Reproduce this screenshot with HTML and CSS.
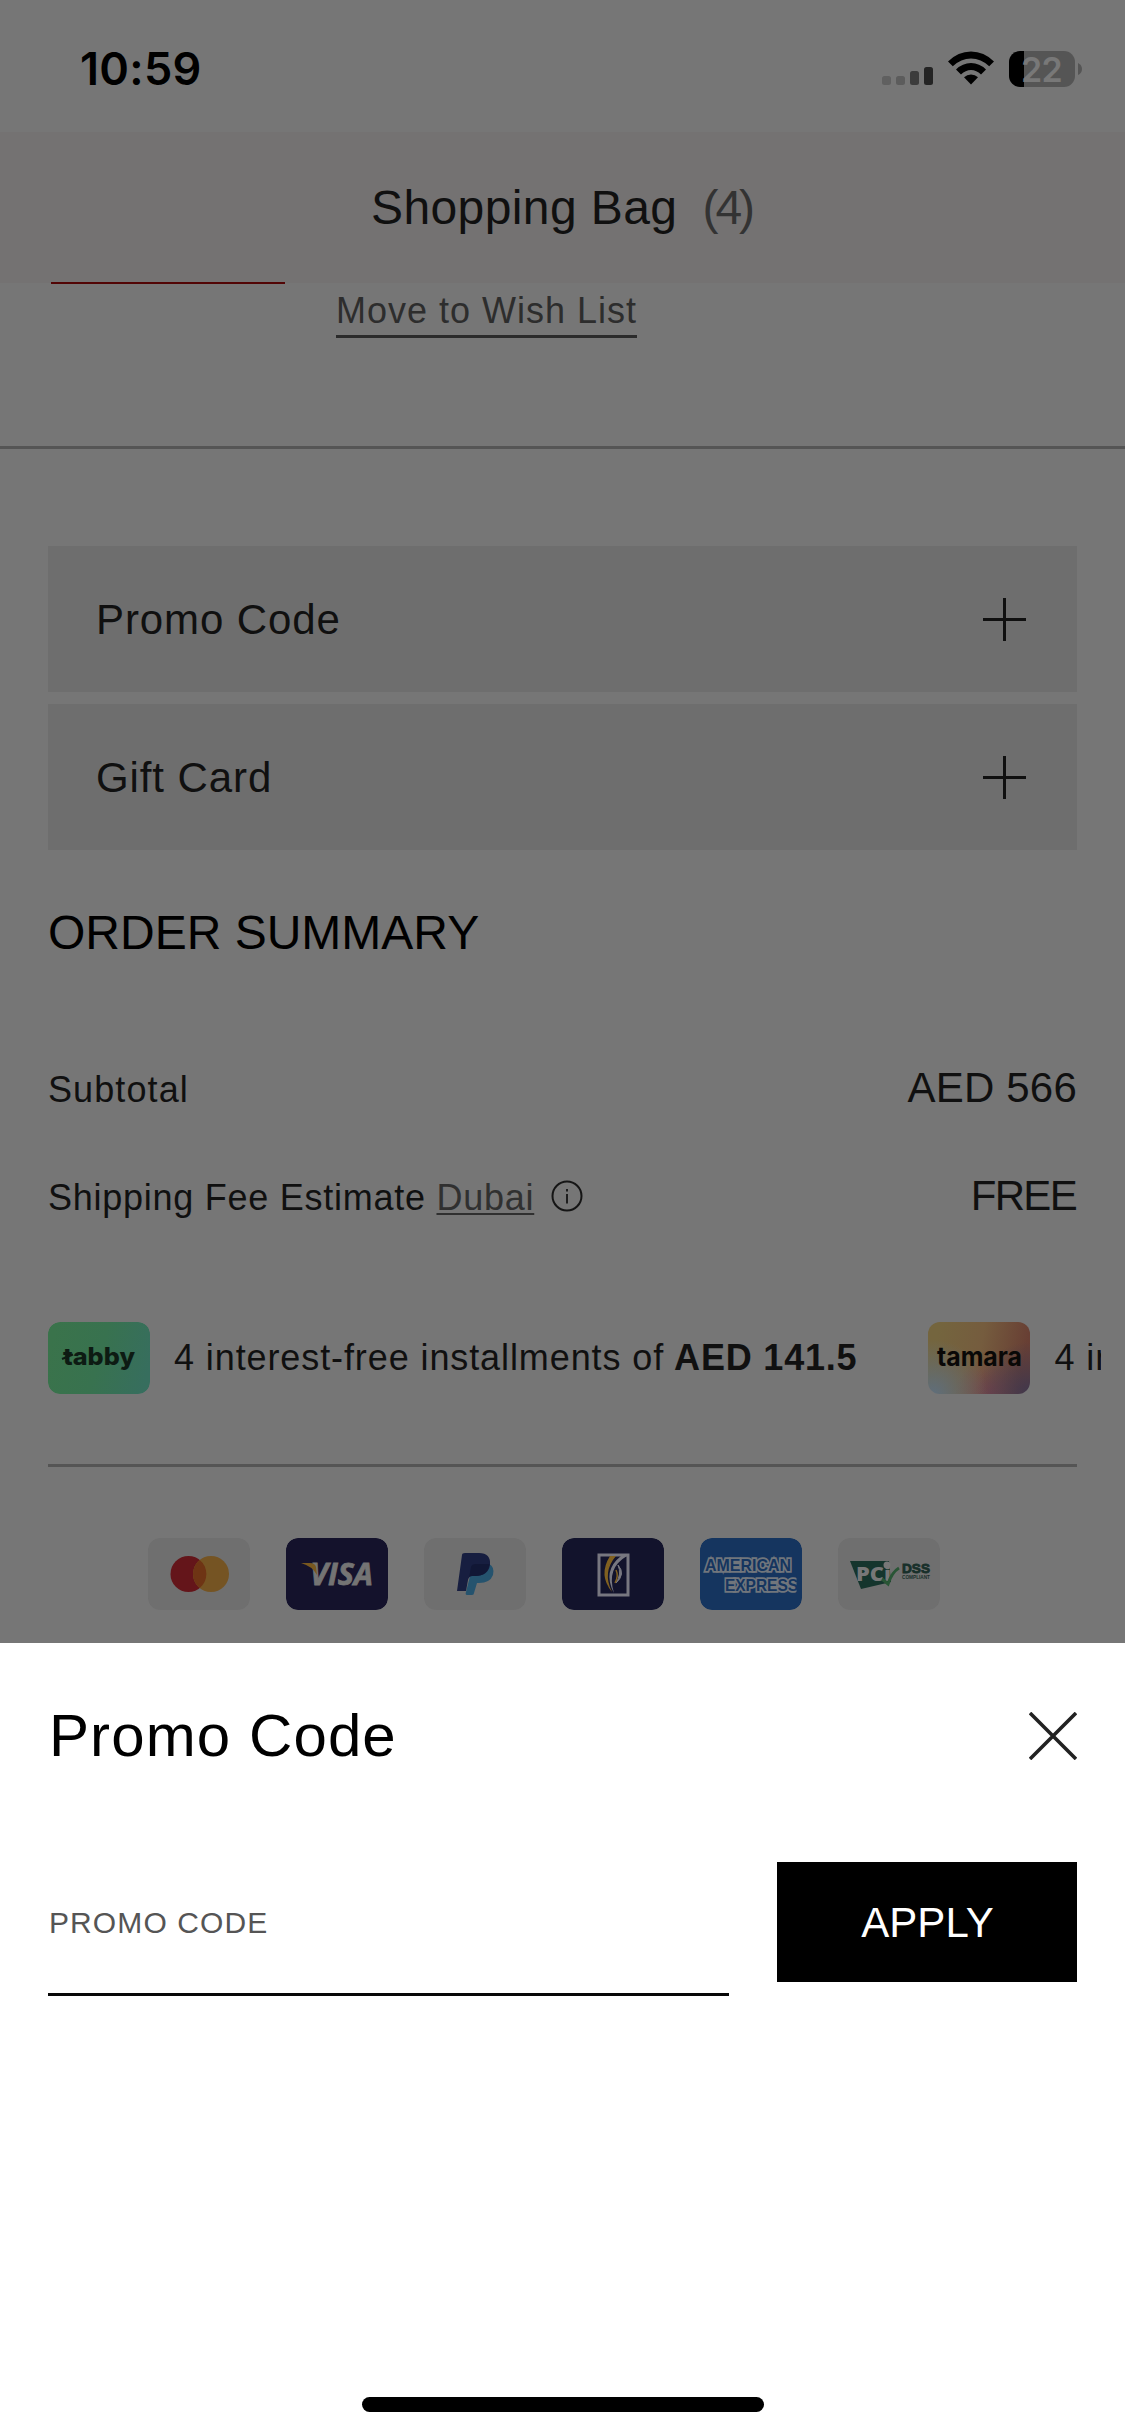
FILE: index.html
```html
<!DOCTYPE html>
<html lang="en">
<head>
<meta charset="utf-8">
<title>Shopping Bag</title>
<link rel="stylesheet" href="styles.css">
</head>
<body>
<div class="screen">
  <div class="status">
    <span class="time">10:59</span>
    <div class="status-icons">
      <svg class="signal" width="51" height="18" viewBox="0 0 51 18">
        <rect x="0" y="9" width="9" height="9" rx="2.5" fill="#606060"/>
        <rect x="14" y="9" width="9" height="9" rx="2.5" fill="#5c5c5c"/>
        <rect x="28" y="4" width="9" height="14" rx="2.5" fill="#3c3c3c"/>
        <rect x="42" y="0" width="9" height="18" rx="2.5" fill="#242424"/>
      </svg>
      <svg class="wifi" width="46" height="34" viewBox="0 0 46 34">
        <path d="M0 10.500Q10 .5 23 .5T46 10.500L41.200 15.300Q33 7.500 23 7.500T4.800 15.300Z"/>
        <path d="M8 18.500Q14.500 12 23 12T38 18.500L33 23.500Q28.500 19 23 19T13 23.500Z"/>
        <path d="M16 26.300Q19 23.500 23 23.500T30 26.300L23 33.500Z"/>
      </svg>
      <div class="battery"><span class="charge">22</span></div>
      <svg class="battery-tip" width="4" height="12" viewBox="0 0 4 12"><path d="M0 0Q4 2 4 6T0 12Z" fill="#555"/></svg>
    </div>
  </div>

  <header class="bag-header">
    <h1>Shopping Bag</h1><span class="count">(4)</span>
  </header>

  <section class="item">
    <div class="thumb-edge"></div>
    <a class="wish">Move to Wish List</a>
  </section>

  <main class="checkout">
    <div class="row-panel"><span>Promo Code</span>
      <svg width="43" height="43" viewBox="0 0 43 43"><path d="M0 21.500H43M21.500 0V43" stroke="#101010" stroke-width="3"/></svg>
    </div>
    <div class="row-panel"><span>Gift Card</span>
      <svg width="43" height="43" viewBox="0 0 43 43"><path d="M0 21.500H43M21.500 0V43" stroke="#101010" stroke-width="3"/></svg>
    </div>

    <h2>ORDER SUMMARY</h2>

    <div class="line subtotal"><span class="label">Subtotal</span><span class="amount">AED 566</span></div>
    <div class="line shipping">
      <span class="label">Shipping Fee Estimate <a class="city">Dubai</a></span>
      <svg class="info" width="32" height="32" viewBox="0 0 32 32" fill="none" stroke="#151515"><circle cx="16" cy="16" r="14.500" stroke-width="2"/><path d="M16 14V23.500M16 9V11.500" stroke-width="1.800"/></svg>
      <span class="amount free">FREE</span>
    </div>

    <div class="plans">
      <svg class="card" width="102" height="72" viewBox="0 0 102 72">
        <defs><linearGradient id="tabbyFill" x1="0" x2="1" y1=".4" y2=".6"><stop stop-color="#3a734b"/><stop offset=".5" stop-color="#38724f"/><stop offset="1" stop-color="#376e5e"/></linearGradient></defs>
        <rect width="102" height="72" rx="12" fill="url(#tabbyFill)"/>
        <text class="tabby-name" x="15" y="42.500" textLength="72" lengthAdjust="spacingAndGlyphs">tabby</text>
        <path d="M14 37L25 32.500" stroke="#0d1b13" stroke-width="2"/>
      </svg>
      <span class="plan-text first-plan">4 interest-free installments of</span><b class="plan-sum">AED 141.5</b>
      <div class="card tamara"><svg width="102" height="72" viewBox="0 0 102 72"><text class="tamara-name" x="9" y="44" textLength="85" lengthAdjust="spacingAndGlyphs">tamara</text></svg></div>
      <span class="plan-text next-plan">4 interest-free</span>
    </div>

    <hr class="divider">

    <div class="payments">
      <svg class="card" width="102" height="72" viewBox="0 0 102 72">
        <rect width="102" height="72" rx="12" fill="#6f6f6f"/>
        <circle cx="40.500" cy="36" r="18" fill="#64151a"/><circle cx="63" cy="36" r="18" fill="#755423"/>
        <path d="M51.700 22A18 18 0 0 1 51.700 50A18 18 0 0 1 51.700 22Z" fill="#6e3414"/>
      </svg>
      <svg class="card" width="102" height="72" viewBox="0 0 102 72">
        <rect width="102" height="72" rx="12" fill="#14122c"/>
        <text class="visa-name" x="24" y="47" textLength="63" lengthAdjust="spacingAndGlyphs">VISA</text>
        <path d="M15 25H24Q29 25 30 29L31 37Q26 28 15 25Z" fill="#79581f"/>
      </svg>
      <svg class="card" width="102" height="72" viewBox="0 0 102 72">
        <rect width="102" height="72" rx="12" fill="#6f6f6f"/>
        <path d="M65 26Q71 29 69 37Q66 45 55 45H53L50 55Q50 57 48 57H43Q41 57 42 54L46 38Z" fill="#25536e"/>
        <path d="M38 17Q38 15 41 15H55Q67 15 66 27Q64 38 51 38H48Q45 38 44 42L42 53H33Z" fill="#171e40"/>
        <path d="M47 29Q48 26 52 26H65.500Q64 38 51 38H48Q45 38 45 40Z" fill="#111735"/>
      </svg>
      <svg class="card" width="102" height="72" viewBox="0 0 102 72">
        <rect width="102" height="72" rx="12" fill="#12132c"/>
        <rect x="37" y="17" width="29" height="40" fill="none" stroke="#777780" stroke-width="3"/>
        <path d="M54 18Q40 34 50 54Q36 37 48 18Z" fill="#806020"/>
        <path d="M65 18Q44 30 52 55Q40 33 59 18Z" fill="#777780"/>
        <path d="M56 27Q64 36 54 45Q60 36 56 27Z" fill="#777780" stroke="#777780"/>
        <path d="M54 32Q57 38 53 45" fill="none" stroke="#806020" stroke-width="1.500"/>
      </svg>
      <svg class="card" width="102" height="72" viewBox="0 0 102 72">
        <rect width="102" height="72" rx="12" fill="#15355f"/>
        <g class="amex-name"><text x="5" y="33" textLength="86" lengthAdjust="spacingAndGlyphs">AMERICAN</text><text x="25" y="52.500" textLength="73" lengthAdjust="spacingAndGlyphs">EXPRESS</text></g>
        <rect x="96.500" y="36" width="5.500" height="20" fill="#15355f"/>
      </svg>
      <svg class="card" width="102" height="72" viewBox="0 0 102 72">
        <rect width="102" height="72" rx="12" fill="#6f6f6f"/>
        <path d="M12 23H51L53 44L23 51Z" fill="#15352d"/>
        <circle cx="49" cy="27" r="3.500" fill="#777"/>
        <text class="pci-name" x="18" y="43" textLength="35" lengthAdjust="spacingAndGlyphs">PCi</text>
        <path d="M44 41L50 46Q54 34 61 30" fill="none" stroke="#295535" stroke-width="3"/>
        <text class="dss-name" x="64" y="35" textLength="28" lengthAdjust="spacingAndGlyphs">DSS</text>
        <text class="dss-note" x="64" y="40.500" textLength="28" lengthAdjust="spacingAndGlyphs">COMPLIANT</text>
      </svg>
    </div>
  </main>

  <section class="sheet">
    <div class="sheet-head">
      <h2>Promo Code</h2>
      <svg width="48" height="48" viewBox="0 0 48 48"><path d="M1 1L47 47M47 1L1 47" stroke="#222" stroke-width="3.6"/></svg>
    </div>
    <div class="form">
      <div class="field">PROMO CODE</div>
      <button class="apply">APPLY</button>
    </div>
    <div class="home-bar"></div>
  </section>
</div>
</body>
</html>
```

FILE: styles.css
```css
* { box-sizing: border-box; }
body { margin: 0; background: #fff; font-family: "Liberation Sans", Arial, sans-serif; color: #101010; }
h1, h2 { margin: 0; font-weight: 400; }
svg { display: block; flex: none; }
.screen { width: 1125px; height: 2436px; display: flex; flex-direction: column; background: #767676; overflow: hidden; white-space: nowrap; }

.status { height: 132px; flex: none; display: flex; justify-content: space-between; padding: 0 43px 0 80px; }
.time { margin-top: 41px; font: 600 45px/56px Inter, sans-serif; color: #000; letter-spacing: .3px; }
.status-icons { display: flex; align-items: flex-start; padding-top: 51px; }
.signal { margin: 16px 15px 0 0; }
.wifi { margin-right: 15px; }
.battery { width: 66px; height: 36px; border-radius: 11px; background: linear-gradient(90deg, #000 15px, #555 15px); }
.charge { display: block; padding-left: 12px; font: 600 34px/37px Inter, sans-serif; color: #787878; letter-spacing: -.8px; }
.battery-tip { margin: 12px 0 0 3px; }

.bag-header { height: 151px; flex: none; display: flex; align-items: flex-start; padding-left: 371px; background: #747272; font-size: 48px; line-height: 56px; }
.bag-header h1 { margin-top: 48px; font-size: 48px; letter-spacing: .4px; }
.count { margin: 48px 0 0 25px; color: #333; letter-spacing: -3px; }

.item { height: 166px; flex: none; display: flex; align-items: flex-start; border-bottom: 3px solid #555; padding-left: 51px; }
.thumb-edge { width: 234px; height: 2px; margin-top: -1px; background: #520505; }
.wish { margin: 7px 0 0 51px; height: 48px; padding-top: 1px; border-bottom: 3px solid #2b2b2b; font-size: 36px; line-height: 40px; color: #2d2d2d; letter-spacing: 1px; }

.checkout { height: 1194px; flex: none; display: flex; flex-direction: column; padding: 97px 48px 0; }
.row-panel { height: 146px; margin-bottom: 12px; display: flex; align-items: center; justify-content: space-between; padding: 0 51px 0 48px; background: #6e6e6e; font-size: 42px; letter-spacing: .9px; }
.row-panel span { padding-top: 2px; }
.checkout h2 { margin-top: 43px; font-size: 48px; line-height: 56px; height: 56px; color: #000; }
.line { height: 48px; display: flex; align-items: baseline; line-height: 48px; }
.subtotal { margin-top: 103px; }
.subtotal .label { letter-spacing: 1.1px; }
.shipping { margin-top: 60px; }
.label { font-size: 36px; letter-spacing: .74px; }
.amount { margin-left: auto; font-size: 42px; letter-spacing: .2px; }
.free { letter-spacing: -1.7px; margin-right: 1px; }
.city { color: #303030; text-decoration: underline; text-decoration-thickness: 2px; text-underline-offset: 3px; }
.info { align-self: flex-start; margin: 8px 0 0 17px; }

.plans { height: 72px; margin-top: 102px; width: 1053px; display: flex; align-items: center; overflow: hidden; font-size: 36px; }
.card { width: 102px; height: 72px; border-radius: 12px; flex: none; }
.plan-text { margin-left: 24px; letter-spacing: .9px; }
.plan-sum { margin-left: 10px; width: 185px; letter-spacing: .8px; }
.tamara { margin-left: 71px; background: radial-gradient(circle at 5% 100%, #5f6e7b 0, transparent 45%), radial-gradient(circle at 100% 100%, #3f374d 0, transparent 42%), radial-gradient(circle at 62% 100%, #70444c 0, transparent 38%), linear-gradient(100deg, #74653e 10%, #755c3e 50%, #683f34 90%); }
.tabby-name { font: 800 24px Inter, sans-serif; fill: #0d1b13; }
.tamara-name { font: 700 26px Inter, sans-serif; fill: #090807; }

.divider { width: 100%; height: 3px; margin: 70px 0 0; border: 0; background: #555; flex: none; }
.payments { display: flex; gap: 36px; margin-top: 71px; padding-left: 100px; }
.visa-name { font: italic 700 31px "Open Sans", sans-serif; fill: #747474; stroke: #747474; stroke-width: .8px; }
.amex-name { font: 700 17px "Liberation Sans", sans-serif; fill: #15355f; stroke: #71767c; stroke-width: 3.6px; paint-order: stroke; }
.pci-name { font: 800 20px "Open Sans", sans-serif; fill: #777; }
.dss-name { font: 700 13px "Liberation Sans", sans-serif; fill: #18302a; stroke: #18302a; stroke-width: .8px; }
.dss-note { font: 700 5.5px "Liberation Sans", sans-serif; fill: #18302a; }

.sheet { flex: 1; display: flex; flex-direction: column; padding: 68px 48px 24px; background: #fff; }
.sheet-head { display: flex; align-items: center; justify-content: space-between; height: 49px; }
.sheet-head h2 { padding-left: 1px; font-size: 60px; line-height: 68px; color: #000; letter-spacing: 1.1px; }
.form { display: flex; align-items: flex-start; gap: 48px; margin-top: 102px; }
.field { width: 681px; height: 134px; border-bottom: 3px solid #080808; font-size: 30px; line-height: 34px; padding: 44px 0 0 1px; color: #555; letter-spacing: 1.1px; }
.apply { width: 300px; height: 120px; border: 0; padding: 2px 0 0 1px; background: #000; color: #fff; font: 42px "Liberation Sans", Arial, sans-serif; }
.home-bar { width: 402px; height: 15px; border-radius: 8px; background: #000; margin: auto auto 0; }
```
